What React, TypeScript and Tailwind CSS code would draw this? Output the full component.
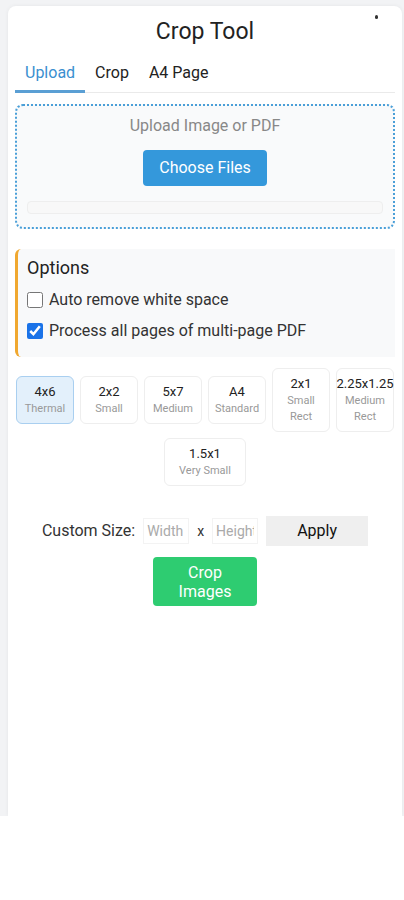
import React from "react";

const sizes = [
  { t: "4x6", s: ["Thermal"], active: true },
  { t: "2x2", s: ["Small"] },
  { t: "5x7", s: ["Medium"] },
  { t: "A4", s: ["Standard"] },
  { t: "2x1", s: ["Small", "Rect"] },
  { t: "2.25x1.25", s: ["Medium", "Rect"] },
  { t: "1.5x1", s: ["Very Small"], wide: true },
];

export default function App() {
  return (
    <div className="w-[404px] bg-white" style={{ fontFamily: "Roboto, 'Noto Sans', sans-serif" }}>
      <div className="h-[816px] bg-[#f2f3f5] pt-[6px] pl-[8px] pr-[2px]">
        <div className="relative h-[810px] bg-white rounded-t-lg shadow-[0_0_4px_rgba(0,0,0,0.06)] px-[7px]">
          <div className="absolute right-[24px] top-[9px] w-[3px] h-[4px] rounded-full bg-[#333]" />
          <h1 className="pt-[13px] text-center text-[23px] leading-[26px] text-[#222]">Crop Tool</h1>
          <div className="mt-[18px] flex border-b border-[#eaeaea] text-[16px] leading-[20px]">
            <div className="px-[10px] pb-[7px] text-[#3a8fd0] border-b-[3px] border-[#5a9fd4] -mb-[1px]">Upload</div>
            <div className="px-[10px] pb-[7px] text-[#222]">Crop</div>
            <div className="px-[10px] pb-[7px] text-[#222]">A4 Page</div>
          </div>
          <div className="mt-[11px] h-[125px] border-2 border-dotted border-[#4a9fd8] rounded-lg bg-[#f9fafb] flex flex-col items-center px-[10px]">
            <div className="mt-[9px] text-[16px] leading-[22px] text-[#888]">Upload Image or PDF</div>
            <button className="mt-[13px] w-[124px] h-[36px] rounded bg-[#3498db] text-white text-[16px]">Choose Files</button>
            <div className="mt-[15px] w-full h-[13px] rounded border border-[#eeeeee] bg-[#f8f8f8]" />
          </div>
          <div className="mt-[20px] h-[108px] bg-[#f8f9fa] border-l-[3px] border-[#f0a830] rounded-l-md pl-[9px] pt-[7px]">
            <div className="text-[18px] leading-[24px] text-[#222]">Options</div>
            <label className="mt-[9px] flex items-center gap-[6px] text-[16px] leading-[22px] text-[#333]">
              <input type="checkbox" className="w-[16px] h-[16px] accent-[#1a73e8]" />
              Auto remove white space
            </label>
            <label className="mt-[9px] flex items-center gap-[6px] text-[16px] leading-[22px] text-[#333]">
              <input type="checkbox" defaultChecked className="w-[16px] h-[16px] accent-[#1a73e8]" />
              Process all pages of multi-page PDF
            </label>
          </div>
          <div className="mt-[11px] flex flex-wrap justify-center items-center gap-x-[6px] gap-y-[6px]">
            {sizes.map((z) => (
              <div
                key={z.t}
                className={
                  "flex flex-col items-center justify-center rounded-md border py-[6px] " +
                  (z.wide ? "w-[82px] " : "w-[58px] ") +
                  (z.active ? "bg-[#e3f0fb] border-[#a9cff0]" : "bg-white border-[#eeeeee]")
                }
              >
                <div className="text-[13px] leading-[18px] text-[#222] whitespace-nowrap">{z.t}</div>
                {z.s.map((l) => (
                  <div key={l} className="text-[11px] leading-[16px] text-[#999] whitespace-nowrap">{l}</div>
                ))}
              </div>
            ))}
          </div>
          <div className="mt-[30px] flex items-center justify-center gap-[6px] text-[16px] text-[#333]">
            <span className="mr-[2px]">Custom Size:</span>
            <input className="w-[46px] h-[26px] px-[3px] bg-white border border-[#f3f3f3] text-[14px] outline-none placeholder-[#aaa]" placeholder="Width" />
            <span className="text-[14px] px-[2px]">x</span>
            <input className="w-[46px] h-[26px] px-[3px] bg-white border border-[#f3f3f3] text-[14px] outline-none placeholder-[#aaa]" placeholder="Height" />
            <button className="ml-[2px] w-[102px] h-[30px] bg-[#efefef] text-[16px] text-[#111]">Apply</button>
          </div>
          <div className="mt-[11px] flex justify-center">
            <button className="w-[104px] h-[49px] rounded bg-[#2ecc71] text-white text-[16px] leading-[19px]">Crop<br />Images</button>
          </div>
        </div>
      </div>
    </div>
  );
}
